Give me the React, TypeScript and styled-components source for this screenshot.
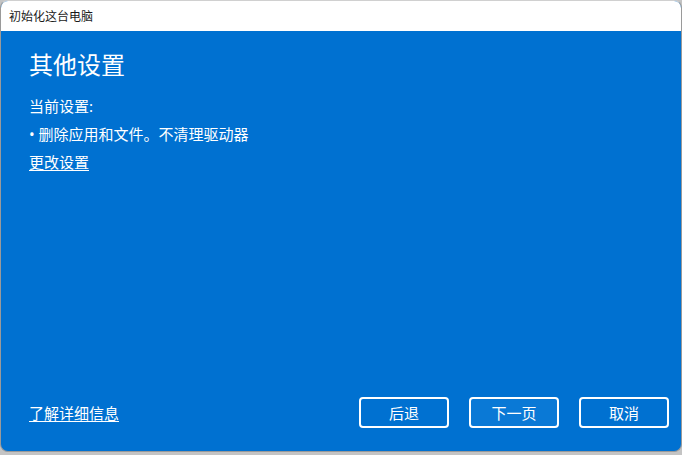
import React from 'react';
import styled, {createGlobalStyle} from 'styled-components';

const GlobalStyle = createGlobalStyle`
  html, body {
    margin: 0;
    padding: 0;
    background: #c4c4c4;
  }
  body {
    font-family: "Noto Sans", "Noto Sans CJK SC", sans-serif;
  }
`;

function App() {
  return (
    <>
      <GlobalStyle />
      <Window>
        <TitleBar>初始化这台电脑</TitleBar>
        <Body>
          <Heading>其他设置</Heading>
          <Text>当前设置:</Text>
          <Text>• 删除应用和文件。不清理驱动器</Text>
          <ChangeLink href="#">更改设置</ChangeLink>
          <Spacer />
          <Footer>
            <FooterLink href="#">了解详细信息</FooterLink>
            <Buttons>
              <Button>后退</Button>
              <Button focused>下一页</Button>
              <Button>取消</Button>
            </Buttons>
          </Footer>
        </Body>
      </Window>
    </>
  );
}

const Window = styled.div`
  display: flex;
  flex-direction: column;
  width: 682px;
  height: 452px;
  box-sizing: border-box;
  border: 1px solid #9a9a9a;
  border-top-color: #d0d0d0;
  border-radius: 8px;
  overflow: hidden;
  background: #0071d1;
`;

const TitleBar = styled.div`
  height: 30px;
  flex: none;
  padding-left: 8px;
  background: #ffffff;
  color: #1a1a1a;
  font-size: 12px;
  line-height: 30px;
  font-family: "Noto Sans CJK SC", sans-serif;
`;

const Body = styled.div`
  flex: 1;
  display: flex;
  flex-direction: column;
  align-items: flex-start;
  padding: 16px 12px 23px 28px;
  color: #ffffff;
  font-family: "Noto Sans", "Noto Sans CJK SC", sans-serif;
`;

const Heading = styled.h1`
  margin: 0 0 11px;
  font-size: 24px;
  font-weight: 400;
  line-height: 34px;
  font-family: "Noto Sans CJK SC", sans-serif;
`;

const Text = styled.div`
  font-size: 15px;
  line-height: 28px;
`;

const ChangeLink = styled.a`
  color: #ffffff;
  font-size: 15px;
  line-height: 28px;
  text-decoration: underline;
  text-underline-offset: 2px;
`;

const Spacer = styled.div`
  flex: 1;
`;

const Footer = styled.div`
  align-self: stretch;
  display: flex;
  align-items: center;
  justify-content: space-between;
`;

const FooterLink = styled.a`
  color: #ffffff;
  font-size: 15px;
  text-decoration: underline;
  text-underline-offset: 2px;
`;

const Buttons = styled.div`
  display: flex;
  gap: 20px;
`;

const Button = styled.button<{focused?: boolean}>`
  width: 90px;
  height: 31px;
  box-sizing: border-box;
  border: 2px solid #ffffff;
  border-radius: 4px;
  background: ${({focused}) => (focused ? '#0a79d6' : '#0071d1')};
  color: #ffffff;
  font-family: "Noto Sans CJK SC", sans-serif;
  font-size: 15px;
  padding: 0;
`;

export default App;
